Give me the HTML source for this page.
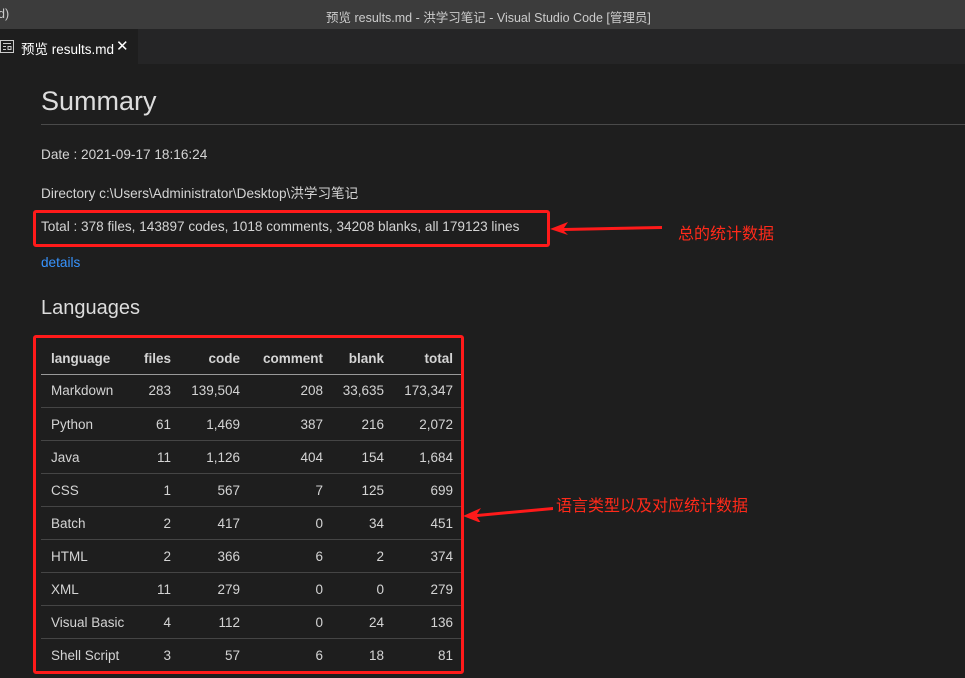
<!DOCTYPE html><html><head><meta charset="utf-8"><style>
body{margin:0;width:965px;height:678px;background:#1e1e1e;overflow:hidden;position:relative;font-family:"Liberation Sans","Noto Sans CJK SC",sans-serif;color:#d4d4d4}
.a{position:absolute;white-space:nowrap}
.tb{position:absolute;left:0;top:0;width:965px;height:29px;background:#3c3c3c;color:#ccc;font-size:12.5px}
.tabs{position:absolute;left:0;top:29px;width:965px;height:35px;background:#252526}
.tab{position:absolute;left:0;top:0;width:138px;height:35px;background:#1e1e1e;color:#fff;font-size:13px}
.t{font-size:13.6px;color:#d4d4d4}
.box{position:absolute;border:3px solid #ff1a1a;border-radius:3px}
.red{color:#ff2a1a;font-size:16px}
.row{position:absolute;left:41px;width:420px;height:33px;border-top:1px solid #454545;font-size:13.5px}
.row span{position:absolute;top:9px}
.hd span{font-weight:bold}
</style></head><body>
<div class="tb"><span class="a" style="left:-2px;top:7px">d)</span><span class="a" style="left:326px;top:7px">预览 results.md - 洪学习笔记 - Visual Studio Code [管理员]</span></div>
<div class="tabs"><div class="tab">
<svg class="a" style="left:0;top:11px" width="14" height="13" viewBox="0 0 14 13"><rect x="0.5" y="0.5" width="13" height="12" fill="none" stroke="#ccc"/><path d="M3 3.5h8M3 6.5h3M3 9.5h3M8 6.5h3v3H8z" stroke="#ccc" fill="none"/></svg>
<span class="a" style="left:21px;top:9px;font-size:13.5px">预览 results.md</span><span class="a" style="left:116px;top:8px;font-size:15px">✕</span></div></div>
<div class="a" style="left:41px;top:86px;font-size:27px;color:#ddd">Summary</div>
<div class="a" style="left:41px;top:124px;width:924px;height:1px;background:#4a4a4a"></div>
<div class="a t" style="left:41px;top:147px">Date : 2021-09-17 18:16:24</div>
<div class="a t" style="left:41px;top:182px">Directory c:\Users\Administrator\Desktop\洪学习笔记</div>
<div class="a t" style="left:41px;top:219px">Total : 378 files, 143897 codes, 1018 comments, 34208 blanks, all 179123 lines</div>
<div class="box" style="left:33px;top:210px;width:511px;height:31px"></div>
<div class="a t" style="left:41px;top:255px;color:#3794ff">details</div>
<svg class="a" style="left:550px;top:220px" width="115" height="16"><polygon points="0,9 18,2 14,8 112,6 112,9 14,11 18,15" fill="#ff1a1a"/></svg>
<div class="a red" style="left:678px;top:220px">总的统计数据</div>
<div class="a" style="left:41px;top:297px;font-size:20px;color:#ddd">Languages</div>
<div class="box" style="left:33px;top:335px;width:425px;height:333px"></div>
<svg class="a" style="left:463px;top:502px" width="92" height="20"><polygon points="0,14 18,6 14,12 90,5 90,8 14,15 18,21" fill="#ff1a1a"/></svg>
<div class="a red" style="left:556px;top:492px">语言类型以及对应统计数据</div>
<div class="row hd" style="top:342px;border-top:none"><span style="left:10px">language</span><span style="right:290px">files</span><span style="right:221px">code</span><span style="right:138px">comment</span><span style="right:77px">blank</span><span style="right:8px">total</span></div>
<div class="a" style="left:41px;top:374px;width:420px;height:1px;background:#999"></div>
<div class="row" style="top:374px;border-top:none"><span style="left:10px">Markdown</span><span style="right:290px">283</span><span style="right:221px">139,504</span><span style="right:138px">208</span><span style="right:77px">33,635</span><span style="right:8px">173,347</span></div>
<div class="row" style="top:407px"><span style="left:10px">Python</span><span style="right:290px">61</span><span style="right:221px">1,469</span><span style="right:138px">387</span><span style="right:77px">216</span><span style="right:8px">2,072</span></div>
<div class="row" style="top:440px"><span style="left:10px">Java</span><span style="right:290px">11</span><span style="right:221px">1,126</span><span style="right:138px">404</span><span style="right:77px">154</span><span style="right:8px">1,684</span></div>
<div class="row" style="top:473px"><span style="left:10px">CSS</span><span style="right:290px">1</span><span style="right:221px">567</span><span style="right:138px">7</span><span style="right:77px">125</span><span style="right:8px">699</span></div>
<div class="row" style="top:506px"><span style="left:10px">Batch</span><span style="right:290px">2</span><span style="right:221px">417</span><span style="right:138px">0</span><span style="right:77px">34</span><span style="right:8px">451</span></div>
<div class="row" style="top:539px"><span style="left:10px">HTML</span><span style="right:290px">2</span><span style="right:221px">366</span><span style="right:138px">6</span><span style="right:77px">2</span><span style="right:8px">374</span></div>
<div class="row" style="top:572px"><span style="left:10px">XML</span><span style="right:290px">11</span><span style="right:221px">279</span><span style="right:138px">0</span><span style="right:77px">0</span><span style="right:8px">279</span></div>
<div class="row" style="top:605px"><span style="left:10px">Visual Basic</span><span style="right:290px">4</span><span style="right:221px">112</span><span style="right:138px">0</span><span style="right:77px">24</span><span style="right:8px">136</span></div>
<div class="row" style="top:638px"><span style="left:10px">Shell Script</span><span style="right:290px">3</span><span style="right:221px">57</span><span style="right:138px">6</span><span style="right:77px">18</span><span style="right:8px">81</span></div>
</body></html>
